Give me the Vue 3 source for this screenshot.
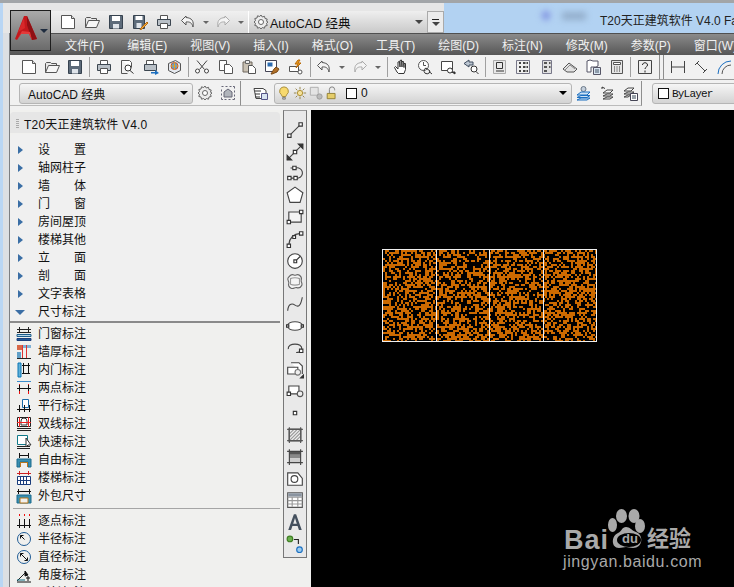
<template>
  <div class="app">
    <div class="titlebar">
      <div class="quick">
        <template v-for="(it, i) in quickItems" :key="i">
          <span v-if="it === 'drop'" class="drop"></span>
          <span v-else class="btn"><Ico :name="it" /></span>
        </template>
        <div class="workspace">
          <Ico name="gear" />
          <span class="ws-label">AutoCAD 经典</span>
          <span class="drop-dark"></span>
        </div>
        <div class="more"><span class="more-line"></span><span class="drop-dark"></span></div>
      </div>
      <div class="title-blur">
        <span class="blob"></span>
        <span class="blob2"></span>
      </div>
      <div class="title-text">T20天正建筑软件 V4.0 Fa</div>
    </div>

    <div class="body">
      <div class="frame"></div>
      <div class="content">
        <div class="menubar">
          <span v-for="m in menus" :key="m" class="menu">{{ m }}</span>
        </div>

        <div class="tb1">
          <template v-for="(it, i) in tb1Items" :key="i">
            <span v-if="it === '|'" class="sep"></span>
            <span v-else-if="it === '||'" class="tb-end"></span>
            <span v-else-if="it === 'drop'" class="drop"></span>
            <span v-else class="btn"><Ico :name="it" /></span>
          </template>
        </div>

        <div class="tb2">
          <div class="tb2-group first">
            <div class="combo style-combo">
              <span>AutoCAD 经典</span>
              <span class="drop-black"></span>
            </div>
            <span class="btn"><Ico name="gear" /></span>
            <span class="btn"><Ico name="lockui" /></span>
          </div>
          <div class="tb2-group layers">
            <span class="btn"><Ico name="layerprops" /></span>
            <div class="combo layer-combo">
              <span class="state"><Ico name="bulb" /></span>
              <span class="state"><Ico name="sun" /></span>
              <span class="state"><Ico name="vp" /></span>
              <span class="state"><Ico name="lock" /></span>
              <span class="swatch"></span>
              <span class="layer-name">0</span>
              <span class="drop-black"></span>
            </div>
            <span class="btn"><Ico name="layer1" /></span>
            <span class="btn"><Ico name="layer2" /></span>
            <span class="btn"><Ico name="layer3" /></span>
          </div>
          <div class="combo color-combo">
            <span class="swatch"></span>
            <span class="bylayer">ByLayer</span>
          </div>
        </div>

        <div class="main">
          <div class="palette">
            <div class="pal-title">
              <span class="grip"></span>
              <span>T20天正建筑软件 V4.0</span>
            </div>
            <div class="pal-body">
              <div class="groups">
                <div v-for="g in groups" :key="g.label" class="row">
                  <span class="arrow-cell"><span :class="g.open ? 'tri-down' : 'tri-right'"></span></span>
                  <span class="label" :class="{ spread: g.spread }">
                    <span v-for="c in g.chars" :key="c">{{ c }}</span>
                  </span>
                </div>
              </div>
              <div class="rule-strong"></div>
              <div class="items">
                <div v-for="it in dimItems" :key="it.label" class="row">
                  <span class="icon-cell"><Ico :name="it.icon" /></span>
                  <span class="label">{{ it.label }}</span>
                </div>
                <div class="rule-light"></div>
                <div v-for="it in dimItems2" :key="it.label" class="row">
                  <span class="icon-cell"><Ico :name="it.icon" /></span>
                  <span class="label">{{ it.label }}</span>
                </div>
              </div>
            </div>
          </div>

          <div class="strip-wrap">
            <div class="strip">
              <span v-for="(it, i) in drawTools" :key="i" class="strip-btn"><Ico :name="it" /></span>
            </div>
          </div>

          <div class="canvas">
            <svg class="drawing" width="230" height="110" viewBox="0 0 230 110">
              <path :d="hatchPath" fill="#cc6a00" shape-rendering="crispEdges" />
              <path d="M7.5 9.5H221.5V101.5H7.5ZM61.5 9.5V101.5M114.5 9.5V101.5M168.5 9.5V101.5" fill="none" stroke="#eee" stroke-width="1" shape-rendering="crispEdges" />
            </svg>
            <div class="mark">
              <div class="mark-top">
                <span class="mark-bai">Bai</span>
                <svg class="paw" width="40" height="44" viewBox="0 0 40 44">
                  <ellipse cx="13.5" cy="8" rx="5.5" ry="7" fill="#a9a9a9" />
                  <ellipse cx="26" cy="8" rx="5.5" ry="7" fill="#a9a9a9" />
                  <ellipse cx="4.5" cy="17" rx="4.5" ry="7" fill="#a9a9a9" />
                  <ellipse cx="32" cy="18" rx="5" ry="7" fill="#a9a9a9" />
                  <path d="M18 19c4 0 5 3 10 5 8 3 7 16-3 16-3 0-5-1-7-1s-4 1-7 1c-8 0-8-12-1-15 4-2 4-6 8-6z" fill="#a9a9a9" />
                  <ellipse cx="21" cy="32" rx="12" ry="7" fill="#000" />
                </svg>
                <span class="mark-du">du</span>
                <span class="mark-cn">经验</span>
              </div>
              <div class="mark-url">jingyan.baidu.com</div>
            </div>
          </div>
        </div>
      </div>
    </div>

    <div class="app-btn">
      <svg width="26" height="28" viewBox="0 0 26 28">
        <path d="M10 1h3l10 23-5 1-3-6H7l-4 6-2-1z" fill="#c4181c" />
        <path d="M13 1l10 23-5 1-5-15z" fill="#8f1014" />
        <path d="M3 25l5-9 8 1 2 8-3-6H7z" fill="#e23a3a" />
        <path d="M10 3L4 17l7-4z" fill="#d8282a" />
      </svg>
      <span class="app-drop"></span>
    </div>
  </div>
</template>

<script setup>
import { h } from 'vue'

const S = '#555'
const D = '#333'
const icons = {
  new: [['M1.500 1.500h10l3 3v10h-13z', S, '#fff'], ['M11.500 1.500v3h3', S, '#ddd']],
  open: [['M1.500 13.500v-9l1-1h4l1 1h5v2', S, '#e8e8e8'], ['M1.500 13.500l3-7h11l-3 7z', S, '#f6f6f6']],
  save: [['M1.500 1.500h13v13h-13z', '#36424f', '#5d6b7a'], ['M4 2h8v5H4z', 'none', '#fff'], ['M5 10h6v4.500H5z', 'none', '#dfe4ea']],
  saveas: [['M1.500 1.500h11v13h-11z', '#36424f', '#5d6b7a'], ['M3.500 2h7v4h-7z', 'none', '#fff'], ['M4.500 9h5v5h-5z', 'none', '#dfe4ea'], ['M9 14l6-6 1 1-6 6-2 1z', '#b56a10', '#f5b042']],
  print: [['M4.500 1.500h7v4h-7z', S, '#fff'], ['M1.500 5.500h13v6h-13z', '#3c4650', '#b9c0c7'], ['M4.500 9.500h7v5h-7z', S, '#fff']],
  undo: [['M6 2L1.500 6.500 6 11V8c4-.5 6 1 7 5 1-6-1-9-7-9.500z', S, '#f4f4f4']],
  redo: [['M10 2l4.500 4.500L10 11V8c-4-.5-6 1-7 5-1-6 1-9 7-9.500z', '#aaa', '#f4f4f4']],
  gear: [['M8 1l1.300 2 2.200-.7.500 2.200 2.200.5-.7 2.200L15 8l-1.500 1.300.7 2.200-2.200.5-.5 2.200-2.200-.7L8 15l-1.300-1.500-2.200.7-.5-2.200-2.200-.5.7-2.200L1 8l1.500-1.300-.7-2.200 2.200-.5.5-2.200 2.200.7z', '#666', '#ececec'], ['M5.500 8a2.500 2.500 0 1 0 5 0a2.500 2.500 0 1 0-5 0z', '#666', '#fff']],
  lockui: [['M1.500 1.500h2M5.500 1.500h2M9.500 1.500h2M13 1.500h1.500v2M14.500 5.500v2M14.500 9.500v2M14.500 13v1.500h-2M10.500 14.500h-2M6.500 14.500h-2M3 14.500H1.500v-2M1.500 10.500v-2M1.500 6.500v-2', '#667', 'none'], ['M4 12V7l4-3 4 3v5z', '#667', '#b0b4bb']],
  preview: [['M2.500 1.500h8l2 2v5', S, '#fff'], ['M2.500 1.500v13h6', S, 'none'], ['M6 9a3 3 0 1 0 6 0a3 3 0 1 0-6 0zM11 11.500l3.500 3', D, '#fff']],
  publish: [['M3.500 1.500h7v4h-7z', S, '#fff'], ['M1.500 5.500h12v6h-12z', '#3c4650', '#b9c0c7'], ['M8 13h4v-2l4 3-4 2v-1.500H8z', 'none', '#1b6fc0']],
  plot3d: [['M2.500 4.500l7-3 5 3v7l-6 3-6-3z', S, '#e4e8ee'], ['M5 7a3.500 3.500 0 1 0 7 0a3.500 3.500 0 1 0-7 0z', '#d2571e', '#5aa0d8'], ['M8.500 3.500v7M5 7h7', '#e8a020', 'none']],
  cut: [['M3 1.500l7.500 9M13 1.500l-7.500 9', '#444', 'none'], ['M1.500 12a2 2 0 1 0 4 0a2 2 0 1 0-4 0zM10.500 12a2 2 0 1 0 4 0a2 2 0 1 0-4 0z', '#444', '#fff']],
  copy: [['M1.500 1.500h7v10h-7z', S, '#fff'], ['M6.500 5.500h5l3 3v6h-8z', S, '#fff']],
  paste: [['M2 3h9v10H2z', '#6e675d', '#c9c1b3'], ['M4.500 1.500h4v3h-4z', '#666', '#eee'], ['M7.500 6.500h4l3 3v5h-7z', S, '#fff']],
  match: [['M1.500 1.500h11v11h-11z', '#445', '#fff'], ['M3.500 3.500h5v4h-5z', 'none', '#2d6cb0'], ['M7 15l3-5 2-2 3 2-2 3-5 2z', '#7c4a15', '#b0702a']],
  block: [['M1.500 7.500h9v5h-9z', S, '#fff'], ['M10 1l-3 4h3l-2 4 5-5h-3l2-3z', '#b96a08', '#f0a020'], ['M10 13a2 2 0 1 0 4 0a2 2 0 1 0-4 0z', S, '#fff']],
  pan: [['M4 13L1.500 8.500l1-1L5 10V3l1.500-.5L7 8V1.500L8.500 1 9 8V2.500l1.500 0L11 8.500V4.500l1.500 0v6L11 14.500H5.500z', '#333', '#fff']],
  zoomrt: [['M1.500 6.500a5 5 0 1 1 10 0a5 5 0 1 1-10 0z', S, '#fff'], ['M6.500 3v3.500H9', S, 'none'], ['M9 9a3 3 0 1 0 4 3zM12 12.500l3 2.500', D, 'none']],
  zoomwin: [['M1.500 2.500h11v9h-11z', '#444', '#fff'], ['M7.500 11.500a2.500 2.500 0 1 0 5 0a2.500 2.500 0 1 0-5 0z', D, '#fff'], ['M12 13l3 2v-2z', D, D]],
  zoomprev: [['M6 1L1 4.500 6 8V6h4V3H6z', '#3e4c5e', '#bcc6d2'], ['M8 10a3 3 0 1 0 6 0a3 3 0 1 0-6 0zM13 12.500l2.500 2.500', D, '#fff']],
  props: [['M1.500 1.500h12v13h-12z', '#aaa', '#e8e8e8'], ['M4.500 3.500h6v6h-6zM4 12h8', '#333', 'none']],
  center: [['M1.500 1.500h13v13h-13z', '#778', '#f0f0f0'], ['M4 3h2v2H4zM4 7h2v2H4zM4 11h2v2H4zM8 3h2.500v2H8zM11.500 3H13v2h-1.500zM8 7h2.500v2H8zM11.500 7H13v2h-1.500zM8 11h2.500v2H8zM11.500 11H13v2h-1.500z', 'none', '#444']],
  tool: [['M3.500 1.500h9v13h-9z', '#778', '#e0e0e0'], ['M5 3h3v2H5zM5 7h3v2H5zM5 11h3v2H5zM10 3h1.500v2H10zM10 7h1.500v2H10z', 'none', '#555']],
  sheet: [['M1 10l6-6 8 6-3 3H5z', '#555', '#e2e2e2'], ['M3 11l5-5 5 4', '#888', 'none']],
  markup: [['M2 2l3-1 3 1h5v5l-2 1H6v5H2z', '#556', '#fff'], ['M8.500 8.500h7v7h-7z', '#556', '#d8e4f0'], ['M10 11h4M10 13h4', '#456', 'none']],
  calc: [['M2.500 1.500h11v13h-11z', S, '#e6e6e6'], ['M4.500 3.500h7v2h-7z', '#555', '#fff'], ['M5 8h1M7.500 8h1M10 8h1M5 10h1M7.500 10h1M10 10h1M5 12h1M7.500 12h1M10 12h1', '#333', 'none']],
  help: [['M1.500 1.500h13v13h-13z', '#444', '#eee'], ['M5.500 6c0-3 5-3 5 0 0 2-2.500 2-2.500 4M8 11.500v2', '#222', 'none']],
  hdim: [['M1.500 2v12M14.500 2v12M1.500 8h13', '#444', 'none']],
  adim: [['M2 6l4-4M10 14l4-4M4 4l8 8', '#444', 'none']],
  arcdim: [['M2 15a13 13 0 0 1 13-13', '#1b6fc0', 'none'], ['M6 15a9 9 0 0 1 9-9', '#555', 'none']],
  layerprops: [['M1 3.500h9l3 2v8H3z', '#444', '#fff'], ['M2 6h6M2 9h5M2 12h5', '#333', 'none'], ['M8.500 8.500h6v6h-6z', '#558', '#d8e4f0']],
  bulb: [['M8 1a5 5 0 0 1 3 9l-1 2H6l-1-2A5 5 0 0 1 8 1z', '#a08530', '#f7d96e'], ['M6.500 13h3v2h-3z', '#777', '#ccc']],
  sun: [['M5 8a3 3 0 1 0 6 0a3 3 0 1 0-6 0z', '#a88826', '#f6e29a'], ['M8 1v3M8 12v3M1 8h3M12 8h3M3 3l2 2M11 11l2 2M13 3l-2 2M5 11l-2 2', '#8d7a3a', 'none']],
  vp: [['M1.500 1.500h9v9h-9z', '#aaa', '#e4e4e4'], ['M9 12a3 3 0 1 0 6 0a3 3 0 1 0-6 0z', '#999', '#bbb']],
  lock: [['M2.500 8.500h9v6h-9z', '#8c7a2e', '#e5cd6a'], ['M5 8V4a3 3 0 0 1 6 0v1', '#777', 'none']],
  layer1: [['M5 4a2.500 2.500 0 1 0 5 0a2.500 2.500 0 1 0-5 0z', '#6a7888', '#c5d0dc'], ['M1 10l4-3h9l-3 3zM1 12.500l4-2h9l-3 2zM1 15l4-2h9l-3 2z', '#1b6fc0', '#cde3f6']],
  layer2: [['M3 2l3 1.500M3 2v2', '#333', 'none'], ['M4 8l4-3h6l-3 3zM4 11l4-2h6l-3 2zM4 14l4-2h6l-3 2z', '#444', '#f6f6f6']],
  layer3: [['M2 6l4-3h6l-3 3zM2 9l4-2h6l-3 2zM2 12l4-2h3l-3 2z', '#444', '#f6f6f6'], ['M8.500 8.500h7v7h-7z', '#445', '#fff'], ['M10 11h4M10 13h4', '#345', 'none']],
  // draw strip
  line: [['M3 13L13 3', '#444', 'none'], ['M1.500 11.500h3v3h-3zM11.500 1.500h3v3h-3z', '#333', '#fff']],
  xline: [['M1 15L15 1', '#444', 'none'], ['M6.500 6.500h3v3h-3z', '#333', '#fff'], ['M1 15v-4l4 4zM15 1v4l-4-4z', '#333', '#333']],
  pline: [['M3 12.500h8M4 3.500h5a4.500 4.500 0 0 1 2 9', '#444', 'none'], ['M1.500 11h3v3h-3zM7 11h3v3H7zM6 2h3v3H6z', '#333', '#fff']],
  polygon: [['M8 1l7 5-2.500 8.500h-9L1 6z', '#444', '#fff']],
  rect: [['M2.500 3.500h11v9h-11z', '#444', '#f4f4f4'], ['M1 11h3v3H1zM12 2h3v3h-3z', '#333', '#fff']],
  arc: [['M2.500 13C3 7 7 3.500 13 3', '#444', 'none'], ['M1 12.500h3v3H1zM6 5h2.500v2.500H6zM12 1.500h3v3h-3z', '#333', '#fff']],
  circle: [['M1.500 8a6.500 6.500 0 1 0 13 0a6.500 6.500 0 1 0-13 0z', '#444', '#fff'], ['M7 7h2.500v2.500H7zM9.500 7l3-3', '#333', 'none']],
  cloud: [['M4 2c2-1.500 3 0 4 0s2-1.500 4 0 2 3 1.500 4.500S15 9 14 11s-3 2.500-4.500 2-3 1.500-5 .5-2.500-3-2-4.500S.5 6 2 4z', '#666', '#f4f4f4'], ['M4 5c2-1 6-1 8 0v5c-2 1-6 1-8 0z', '#999', 'none']],
  spline: [['M1.500 14C2 8 5 7 8 9s5 1 6.500-7', '#444', 'none']],
  ellipse: [['M1.500 8c0-5 13-5 13 0s-13 5-13 0z', '#444', '#fff'], ['M.5 7h2v2h-2zM13.500 7h2v2h-2z', '#333', '#fff']],
  ellarc: [['M2 9c-1-6 13-6 12 0 0 2-3 3-5 3', '#444', 'none'], ['M12 9h3v3h-3z', '#333', '#fff']],
  insert: [['M4.500 1.500h7l3 3v7', '#444', '#fff'], ['M1.500 5.500h9v6h-9z', '#444', '#fff'], ['M8 10a2.500 2.500 0 1 0 5 0a2.500 2.500 0 1 0-5 0z', '#777', '#eee'], ['M13 15l3-3v3z', D, D]],
  mblock: [['M2.500 3.500h9v7h-9z', '#444', '#fff'], ['M1 9h3v3H1z', '#333', '#fff'], ['M10 10.500a2.500 2.500 0 1 0 5 0a2.500 2.500 0 1 0-5 0z', '#555', '#eee']],
  point: [['M6.500 6.500h3v3h-3z', '#333', '#fff']],
  hatch: [['M2.500 2.500h11v11h-11z', '#888', '#eee'], ['M3 7l4-4M3 10l7-7M3 13l10-10M6 13l7-7M9 13l4-4', '#999', 'none'], ['M1 3h14M1 13h14M3 1v14M13 1v14', '#555', 'none']],
  grad: [['M3 3h10v3H3z', 'none', '#555'], ['M3 6h10v3H3z', 'none', '#888'], ['M3 9h10v4H3z', 'none', '#ccc'], ['M1 3h14M1 13h14M3 1v14M13 1v14', '#444', 'none']],
  region: [['M1.500 2.500h9l4 5v6h-13z', '#444', '#fff'], ['M4.500 8a3 3 0 1 0 6 0a3 3 0 1 0-6 0z', '#444', '#fff']],
  table: [['M1.500 1.500h13v13h-13z', '#555', '#fff'], ['M2 2h12v3H2z', 'none', '#8a94a0'], ['M1.500 5.500h13M1.500 8.500h13M1.500 11.500h13M5.500 5v9M10.500 5v9', '#999', 'none']],
  mtext: [['M2 15L7 1h2l5 14h-2.500l-1.200-3.500H5.700L4.500 15zM6.400 9.500h3.200L8 4.500z', 'none', '#44505e']],
  addsel: [['M1 3.500a2.500 2.500 0 1 0 5 0a2.500 2.500 0 1 0-5 0z', '#3f7d24', '#6ab04c'], ['M9.500 13a2.500 2.500 0 1 0 5 0a2.500 2.500 0 1 0-5 0z', '#1b6fc0', '#9acbf0'], ['M7 4h4v4', '#222', 'none']],
  // palette
  doorDim: [['M3.500 1v5M12.500 1v5M1 3.500h14M1 6.500h14', '#222', 'none'], ['M1 8.500h14v2H1z', '#1b5e8c', '#b7d5ea'], ['M1 12.500h14v2H1z', '#1b3f7c', '#245a96']],
  wallDim: [['M1 1h5v5H1z', 'none', '#d86848'], ['M6 1h9v3H6z', 'none', '#7fb2d6'], ['M6.500 1v14M10.500 1v14', '#d33', 'none'], ['M1 8h4v6H1z', 'none', '#60a0c8'], ['M1 14.500h14', '#222', 'none']],
  innerDim: [['M2 1h3v14H2z', '#0b77b5', '#60b0d8'], ['M6 3.500h8M7.500 1v10M12.500 1v10M6 11.500h8', '#111', 'none']],
  twoDim: [['M1 1.500h14', '#3c8dcc', 'none'], ['M3.500 4v10M12.500 4v10', '#e11', 'none'], ['M1 8.500h14M3.500 5v6M12.500 5v6', '#111', 'none']],
  parDim: [['M6.500 1.500h6v8h-6z', '#1a6ba8', '#fff'], ['M1 11.500h14M3.500 7v7M8.500 7v7M13.500 7v7', '#111', 'none']],
  dblDim: [['M1.500 1.500h13v9h-13z', '#222', '#fff'], ['M5 5a3 3 0 1 1 6 0v4H5z', '#333', '#fff'], ['M1 6.500h14M3.500 1v10M12.500 1v10', '#e22', 'none'], ['M1 12.500h14M1 14.500h14', '#222', 'none']],
  quickDim: [['M1.500 1.500h10v9h-10z', '#117a8a', '#fff'], ['M1 12.500h13M1 14.500h13', '#222', 'none'], ['M10 4v9l2-2 3 0z', '#333', '#fff']],
  freeDim: [['M3.500 1v5M12.500 1v5M3 3.500h10', '#111', 'none'], ['M1 7h14v8h-3V10H4v5H1z', '#1a6a8e', '#3a8fb0'], ['M4 10h8v5h-1v-4H5v4H4z', 'none', '#b8761d']],
  stairDim: [['M3.500 1v4M12.500 1v4M1 3.500h14', '#c22', 'none'], ['M1.500 6.500h13v8h-13z', '#1a3d7c', '#fff'], ['M4.500 7v7M7.500 7v7M10.500 7v7M1 10.500h14', '#1a3d7c', 'none']],
  outerDim: [['M2.500 1v5M13.500 1v5M1 3.500h14', '#111', 'none'], ['M1 7h14v8H1z', '#1a6a8e', '#3a8fb0'], ['M4 10h8v5H4z', '#b8761d', '#f0f0ee']],
  pointDim: [['M3.500 1v2M8.500 1v2M13.500 1v2', '#e11', 'none'], ['M3.500 6v9M8.500 6v9M13.500 6v9M1 12.500h14', '#111', 'none']],
  radDim: [['M1.500 8a6.500 6.500 0 1 0 13 0a6.500 6.500 0 1 0-13 0z', '#1f5c96', '#f0f0ee'], ['M4.500 4.500l4 4M4.500 4.500v3M4.500 4.500h3', '#111', 'none']],
  diaDim: [['M1.500 8a6.500 6.500 0 1 0 13 0a6.500 6.500 0 1 0-13 0z', '#1f5c96', '#f0f0ee'], ['M4.500 4.500l7 7M4.500 4.500v3M4.500 4.500h3M11.500 11.500v-3M11.500 11.500h-3', '#111', 'none']],
  angDim: [['M1 14l9-9', '#222', 'none'], ['M1 15h14', '#111', 'none'], ['M1 13h8', '#0d6d80', 'none'], ['M9 4l3 4-3 1zM12 9v5M10 11h4', '#111', '#111']]
}

const Ico = (props) => h('svg', { width: 16, height: 16, viewBox: '0 0 16 16' },
  (icons[props.name] || []).map(([d, stroke, fill]) => h('path', { d, stroke, fill }))
)
Ico.props = ['name']

const quickItems = ['new', 'open', 'save', 'saveas', 'print', 'undo', 'drop', 'redo', 'drop']
const menus = ['文件(F)', '编辑(E)', '视图(V)', '插入(I)', '格式(O)', '工具(T)', '绘图(D)', '标注(N)', '修改(M)', '参数(P)', '窗口(W)']
const tb1Items = ['new', 'open', 'save', '|', 'print', 'preview', 'publish', 'plot3d', '|', 'cut', 'copy', 'paste', 'match', 'block', '|',
  'undo', 'drop', 'redo', 'drop', '|', 'pan', 'zoomrt', 'zoomwin', 'zoomprev', '|', 'props', 'center', 'tool', 'sheet', 'markup', 'calc', '|', 'help', '||', 'hdim', 'adim', 'arcdim']

const groupNames = [['设', '置'], ['轴网柱子'], ['墙', '体'], ['门', '窗'], ['房间屋顶'], ['楼梯其他'], ['立', '面'], ['剖', '面'], ['文字表格'], ['尺寸标注']]
const groups = groupNames.map((g, i) => ({
  label: g.join(''),
  chars: g.length > 1 ? g : [g[0]],
  spread: g.length > 1,
  open: i === 9
}))

const dimItems = [
  { label: '门窗标注', icon: 'doorDim' },
  { label: '墙厚标注', icon: 'wallDim' },
  { label: '内门标注', icon: 'innerDim' },
  { label: '两点标注', icon: 'twoDim' },
  { label: '平行标注', icon: 'parDim' },
  { label: '双线标注', icon: 'dblDim' },
  { label: '快速标注', icon: 'quickDim' },
  { label: '自由标注', icon: 'freeDim' },
  { label: '楼梯标注', icon: 'stairDim' },
  { label: '外包尺寸', icon: 'outerDim' }
]
const dimItems2 = [
  { label: '逐点标注', icon: 'pointDim' },
  { label: '半径标注', icon: 'radDim' },
  { label: '直径标注', icon: 'diaDim' },
  { label: '角度标注', icon: 'angDim' },
  { label: '弧长标注', icon: 'angDim' }
]

const drawTools = ['line', 'xline', 'pline', 'polygon', 'rect', 'arc', 'circle', 'cloud', 'spline', 'ellipse', 'ellarc', 'insert', 'mblock', 'point', 'hatch', 'grad', 'region', 'table', 'mtext', 'addsel']

// noise for the hatch, fixed seed so the picture stays the same
function makeHatch() {
  let seed = 20240
  const next = () => {
    seed = (seed + 0x6d2b79f5) | 0
    let t = Math.imul(seed ^ (seed >>> 15), 1 | seed)
    t = (t + Math.imul(t ^ (t >>> 7), 61 | t)) ^ t
    return ((t ^ (t >>> 14)) >>> 0) / 4294967296
  }
  let d = ''
  for (let y = 10; y < 101; y += 2) {
    for (let x = 8; x < 221; x += 2) {
      if (next() < 0.52) d += `M${x} ${y}h2v2h-2z`
    }
  }
  return d
}
const hatchPath = makeHatch()
</script>

<style scoped>
.app {
  position: relative;
  width: 734px;
  height: 587px;
  overflow: hidden;
  display: flex;
  flex-direction: column;
  background: #f0f0ee;
  font-family: "Liberation Sans", "Noto Sans CJK SC", sans-serif;
  font-size: 12px;
  color: #111;
}

.titlebar {
  position: relative;
  height: 33px;
  flex: none;
  padding: 8px 0 0 50px;
  box-sizing: border-box;
  border-top: 3px solid #a2a5a8;
  background: linear-gradient(to right, #b9d6f4 3px, #e6e6e6 3px, #e6e6e6 444px, #b2d2f2 444px);
  display: flex;
}
.quick {
  display: flex;
  align-items: center;
  height: 22px;
  padding: 0 0 0 6px;
  background: linear-gradient(#f0f0f0, #d8d8d8);
}
.quick .btn {
  width: 24px;
}
.workspace {
  width: 179px;
  height: 22px;
  margin-left: 2px;
  display: flex;
  align-items: center;
  padding: 0 4px 0 4px;
  box-sizing: border-box;
  background: linear-gradient(#efefef, #c9c9c9);
  border-left: 1px solid #fff;
  font-size: 12.5px;
}
.ws-label {
  flex: 1;
  margin-left: 1px;
}
.more {
  width: 17px;
  height: 22px;
  box-sizing: border-box;
  border: 1px solid #aaa;
  background: #ececec;
  display: flex;
  flex-direction: column;
  align-items: center;
  justify-content: center;
  gap: 2px;
}
.more-line {
  width: 7px;
  height: 1px;
  background: #222;
}
.title-blur {
  position: absolute;
  inset: 0;
  filter: blur(3px);
}
.blob {
  position: absolute;
  left: 542px;
  top: 8px;
  width: 8px;
  height: 9px;
  border-radius: 50%;
  background: #7d8fe0;
}
.blob2 {
  position: absolute;
  left: 562px;
  top: 9px;
  width: 24px;
  height: 8px;
  background: #93aecb;
}
.title-text {
  position: absolute;
  left: 600px;
  top: 8px;
  font-size: 12px;
  white-space: nowrap;
  color: #222;
}

.body {
  flex: 1;
  min-height: 0;
  display: flex;
}
.frame {
  width: 10px;
  flex: none;
  box-sizing: border-box;
  border-left: 3px solid #b9d6f4;
  border-right: 1px solid #7c7f83;
  background: #dcdfe3;
}
.content {
  flex: 1;
  min-width: 0;
  display: flex;
  flex-direction: column;
}

.menubar {
  height: 22px;
  flex: none;
  padding-left: 55px;
  display: flex;
  align-items: center;
  gap: 23px;
  background: linear-gradient(#8b8b8b, #565656);
  border-top: 1px solid #505050;
  box-sizing: border-box;
  overflow: hidden;
  white-space: nowrap;
}
.menu {
  color: #f0f0f0;
}

.tb1 {
  height: 25px;
  flex: none;
  display: flex;
  align-items: center;
  padding-left: 7px;
  background: #f1f1f1;
  border-bottom: 1px solid #9a9a9a;
  box-sizing: border-box;
  overflow: hidden;
}
.tb1 .drop {
  margin: 0 3.300px;
}
.btn {
  width: 23.300px;
  height: 20px;
  flex: none;
  display: flex;
  align-items: center;
  justify-content: center;
}
.btn svg, .state svg {
  display: block;
}
.sep {
  width: 1px;
  height: 20px;
  margin: 0 2.200px;
  flex: none;
  background: #a0a0a0;
}
.tb-end {
  width: 3px;
  height: 24px;
  margin: 0 2px;
  flex: none;
  border-left: 1px solid #8e8e8e;
  border-right: 1px solid #8e8e8e;
}
.drop {
  width: 0;
  height: 0;
  margin: 0 2.500px;
  flex: none;
  border-left: 3px solid transparent;
  border-right: 3px solid transparent;
  border-top: 3px solid #666;
}
.drop-dark {
  width: 0;
  height: 0;
  flex: none;
  border-left: 4px solid transparent;
  border-right: 4px solid transparent;
  border-top: 4px solid #444;
}
.drop-black {
  width: 0;
  height: 0;
  flex: none;
  margin-left: auto;
  border-left: 4px solid transparent;
  border-right: 4px solid transparent;
  border-top: 4px solid #000;
}

.tb2 {
  height: 30px;
  flex: none;
  display: flex;
  align-items: center;
  padding-bottom: 3px;
  background: #f1f1f1;
  box-sizing: border-box;
  overflow: hidden;
}
.tb2-group {
  display: flex;
  align-items: center;
  flex: none;
  height: 25px;
  border-right: 1px solid #8e8e8e;
  border-bottom: 1px solid #bbb;
  box-sizing: border-box;
}
.first {
  width: 231px;
  padding-left: 9px;
}
.layers {
  width: 401px;
  padding-left: 8px;
}
.combo {
  height: 21px;
  display: flex;
  align-items: center;
  box-sizing: border-box;
  border: 1px solid #b5b5b5;
  border-radius: 3px;
  background: linear-gradient(#f6f6f6, #d3d3d3);
  padding: 0 4px 0 8px;
}
.style-combo {
  width: 174px;
}
.first .btn {
  width: 23px;
}
.layers .btn {
  width: 23px;
}
.layer-combo {
  flex: 1;
  margin-left: 2px;
  padding-left: 2px;
}
.state {
  width: 16px;
  flex: none;
}
.state svg {
  width: 14px;
  height: 14px;
}
.swatch {
  width: 9px;
  height: 9px;
  margin: 0 4px 0 5px;
  flex: none;
  border: 1px solid #111;
  background: #fff;
}
.color-combo {
  width: 120px;
  margin-left: 10px;
  padding-left: 0;
  flex: none;
}
.color-combo .swatch {
  margin-right: 3px;
}
.bylayer {
  font-family: "Liberation Mono", monospace;
  font-size: 11px;
  letter-spacing: -0.8px;
}

.main {
  flex: 1;
  min-height: 0;
  display: flex;
  background: #f0f0ee;
}
.palette {
  width: 270px;
  flex: none;
  padding-top: 2px;
  overflow: hidden;
  box-sizing: border-box;
}
.pal-title {
  height: 21px;
  display: flex;
  align-items: center;
  gap: 5px;
  padding: 2px 0 0 6px;
  box-sizing: border-box;
  background: #e6e6e6;
  border-radius: 4px 4px 0 0;
  font-size: 12px;
  letter-spacing: 0.2px;
}
.grip {
  width: 3px;
  height: 9px;
  background: repeating-linear-gradient(#aaa 0 1px, transparent 1px 2px);
}
.pal-body {
  margin-top: 1px;
  padding-top: 7px;
  background: #f0f0f0;
  border-radius: 5px 5px 0 0;
}
.row {
  height: 18px;
  display: flex;
  align-items: center;
  line-height: 18px;
}
.arrow-cell, .icon-cell {
  width: 28px;
  flex: none;
  display: flex;
  justify-content: center;
}
.arrow-cell {
  width: 20px;
  margin-right: 8px;
}
.icon-cell svg {
  display: block;
}
.tri-right {
  width: 0;
  height: 0;
  border-left: 5px solid #3a6ea5;
  border-top: 4.500px solid transparent;
  border-bottom: 4.500px solid transparent;
}
.tri-down {
  width: 0;
  height: 0;
  border-top: 5px solid #3a6ea5;
  border-left: 5px solid transparent;
  border-right: 5px solid transparent;
}
.label {
  width: 48px;
  display: flex;
  white-space: nowrap;
}
.label.spread {
  justify-content: space-between;
}
.rule-strong {
  height: 2px;
  background: #8a8a8a;
}
.items {
  padding-top: 2px;
  background: #f0f0ee;
}
.rule-light {
  height: 1px;
  margin: 3px 0 3px 3px;
  background: #a5a5a5;
}

.strip-wrap {
  width: 31px;
  flex: none;
  padding-left: 3px;
  box-sizing: border-box;
}
.strip {
  width: 24px;
  height: 448px;
  display: flex;
  flex-direction: column;
  align-items: center;
  padding-top: 8px;
  box-sizing: border-box;
  background: #e9e9e9;
  border: 1px solid #777;
  border-top-color: #999;
}
.strip-btn {
  height: 21.800px;
  flex: none;
  display: flex;
  align-items: center;
}
.strip-btn svg {
  display: block;
  width: 18px;
  height: 18px;
}

.canvas {
  position: relative;
  flex: 1;
  background: #000;
  overflow: hidden;
}
.drawing {
  position: absolute;
  left: 64px;
  top: 130px;
}
.mark {
  position: absolute;
  left: 253px;
  top: 398px;
  width: 140px;
  color: #a9a9a9;
}
.mark-top {
  position: relative;
  height: 47px;
  display: flex;
  align-items: flex-end;
}
.mark-bai {
  font-weight: bold;
  font-size: 27px;
  line-height: 30px;
  letter-spacing: 1px;
}
.paw {
  position: absolute;
  left: 44px;
  top: 0;
}
.mark-du {
  position: absolute;
  left: 58px;
  top: 24px;
  font-weight: bold;
  font-size: 13px;
  line-height: 14px;
  color: #a9a9a9;
}
.mark-cn {
  position: absolute;
  left: 83px;
  top: 17px;
  font-size: 22px;
  font-weight: bold;
  line-height: 28px;
  white-space: nowrap;
}
.mark-url {
  font-size: 16px;
  line-height: 20px;
  margin: -3px 0 0 -1px;
  white-space: nowrap;
  letter-spacing: 0.6px;
}

.app-btn {
  position: absolute;
  left: 10px;
  top: 10px;
  width: 41px;
  height: 41px;
  box-sizing: border-box;
  border: 1px solid #1d1d1d;
  background: linear-gradient(#aaa, #6b6b6b);
  display: flex;
  align-items: flex-start;
  padding: 4px 0 0 3px;
}
.app-drop {
  position: absolute;
  right: 2px;
  top: 18px;
  width: 0;
  height: 0;
  border-left: 4px solid transparent;
  border-right: 4px solid transparent;
  border-top: 4px solid #1f2c3f;
}
</style>
